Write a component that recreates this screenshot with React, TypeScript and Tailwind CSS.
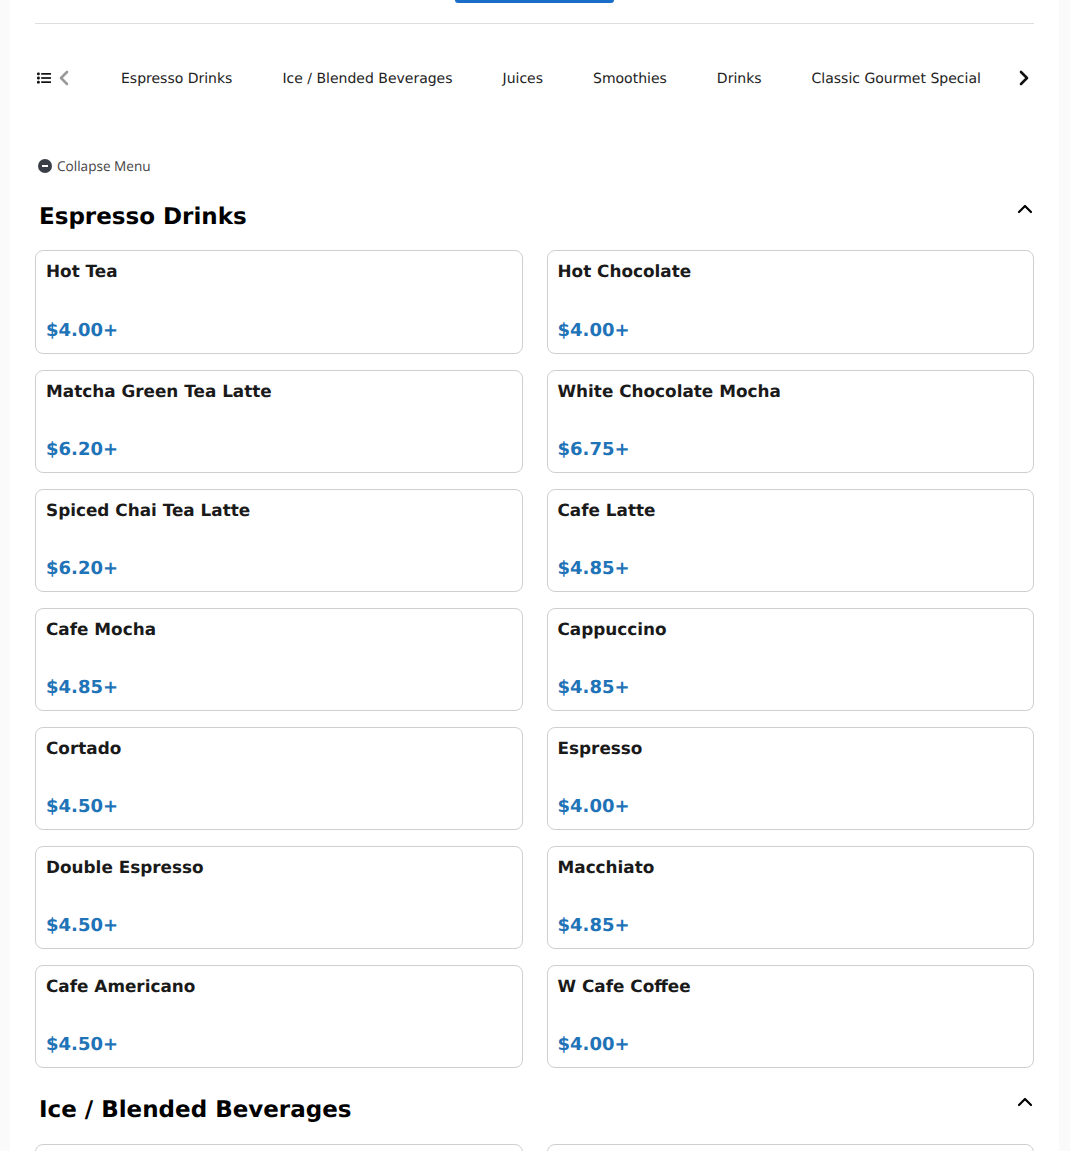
import { ChevronLeft, ChevronRight, ChevronUp } from "lucide-react";

const espresso: [string, string][] = [
  ["Hot Tea", "$4.00+"], ["Hot Chocolate", "$4.00+"],
  ["Matcha Green Tea Latte", "$6.20+"], ["White Chocolate Mocha", "$6.75+"],
  ["Spiced Chai Tea Latte", "$6.20+"], ["Cafe Latte", "$4.85+"],
  ["Cafe Mocha", "$4.85+"], ["Cappuccino", "$4.85+"],
  ["Cortado", "$4.50+"], ["Espresso", "$4.00+"],
  ["Double Espresso", "$4.50+"], ["Macchiato", "$4.85+"],
  ["Cafe Americano", "$4.50+"], ["W Cafe Coffee", "$4.00+"],
];
const tabs = ["Espresso Drinks", "Ice / Blended Beverages", "Juices", "Smoothies", "Drinks", "Classic Gourmet Special"];

function Card({ name, price }: { name: string; price?: string }) {
  return (
    <div className="h-[103.1px] rounded-lg border border-[#cfcfcf] bg-white px-[10px] pt-[8px]">
      <div className="text-[16.85px] leading-[24px] font-bold text-[#1a1a1a]">{name}</div>
      {price && <div className="mt-[35.1px] text-[18px] leading-[24px] font-bold text-[#1f73b7]">{price}</div>}
    </div>
  );
}

function Heading({ children }: { children: string }) {
  return (
    <div className="flex h-[32px] items-start justify-between pl-1">
      <h2 className="text-[23px] leading-[34px] font-bold text-black">{children}</h2>
      <ChevronUp className="mt-[-3px] mr-[-3px] h-[24px] w-[24px] text-black" strokeWidth={2.2} />
    </div>
  );
}

export default function App() {
  return (
    <div className="h-[1151px] overflow-hidden bg-[#fafafa] font-['DejaVu_Sans',sans-serif] [text-rendering:geometricPrecision]">
      <div className="ml-[10px] mr-[11px] h-full bg-white px-[25px]">
        <div className="h-[24px] border-b border-[#dedede]">
          <div className="mx-auto h-[3px] w-[159px] rounded-b bg-[#1a6ec9]" />
        </div>
        <div className="mt-[44px] flex h-[20px] items-center">
          <svg viewBox="0 0 14 12" className="ml-[2px] h-[12px] w-[14px]" fill="#111">
            <rect x="0" y="0.4" width="2.8" height="2.8" rx="1.2" />
            <rect x="0" y="4.6" width="2.8" height="2.8" rx="1.2" />
            <rect x="0" y="8.8" width="2.8" height="2.8" rx="1.2" />
            <rect x="4.2" y="1" width="9.8" height="1.7" />
            <rect x="4.2" y="5.15" width="9.8" height="1.7" />
            <rect x="4.2" y="9.3" width="9.8" height="1.7" />
          </svg>
          <ChevronLeft className="ml-[1px] h-[24px] w-[24px] shrink-0 text-[#9a9a9a]" strokeWidth={2.6} />
          <div className="ml-[45px] flex gap-[50px] pt-[2px] text-[14px] leading-[20px] whitespace-nowrap text-[#222]">
            {tabs.map((t) => <span key={t}>{t}</span>)}
          </div>
          <ChevronRight className="mr-[-2px] ml-auto h-[24px] w-[24px] shrink-0 text-[#111]" strokeWidth={2.6} />
        </div>
        <div className="mt-[68px] ml-[3px] flex h-[20px] items-center gap-[5px] font-['Open_Sans',sans-serif] text-[13.6px] text-[#444]">
          <span className="flex h-[14px] w-[14px] items-center justify-center rounded-full bg-[#3a3f47]">
            <span className="h-[2px] w-[6px] bg-white" />
          </span>
          Collapse Menu
        </div>
        <div className="mt-[24px]">
          <Heading>Espresso Drinks</Heading>
        </div>
        <div className="mt-[18.45px] grid grid-cols-2 gap-x-[24px] gap-y-[16px]">
          {espresso.map(([n, p]) => <Card key={n} name={n} price={p} />)}
        </div>
        <div className="mt-[25px]">
          <Heading>Ice / Blended Beverages</Heading>
        </div>
        <div className="mt-[19px] grid grid-cols-2 gap-x-[24px] gap-y-[16px]">
          <Card name="" />
          <Card name="" />
        </div>
      </div>
    </div>
  );
}
